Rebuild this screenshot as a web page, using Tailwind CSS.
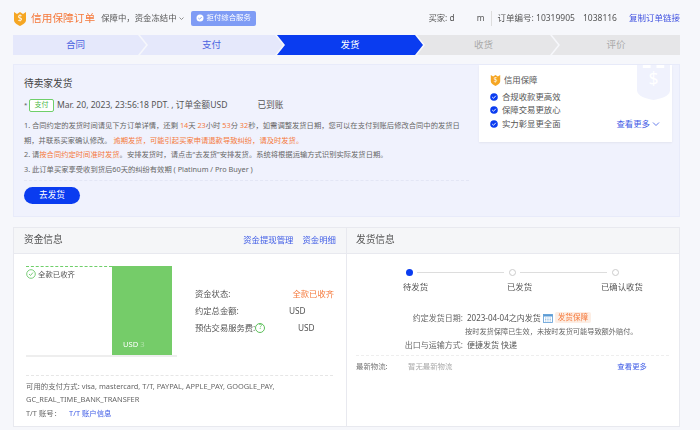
<!DOCTYPE html>
<html lang="zh-CN">
<head>
  <meta charset="UTF-8" />
  <title>信用保障订单</title>
  <script src="https://cdn.jsdelivr.net/npm/@tailwindcss/browser@4"></script>
</head>
<body class="bg-[#f6f7fb] text-[#555] w-[700px] h-[430px] overflow-hidden blur-[0.3px] font-['Noto_Sans','Noto_Sans_CJK_SC',sans-serif] text-[8px]">

  <!-- 顶部 -->
  <div class="flex items-center h-[35px] pl-[13px] pr-[20px] pt-[1px]">
    <svg width="14" height="15" viewBox="0 0 14 15"><path d="M1 1l3 2 3-2 3 2 3-2v8c0 3-3 4.500-6 6-3-1.500-6-3-6-6z" fill="#f5a623"/><text x="7" y="10" font-size="8" fill="#fff" text-anchor="middle">$</text></svg>
    <span class="ml-[4px] text-[10.7px] text-[#f5793b]">信用保障订单</span>
    <span class="ml-[6px] text-[8.4px] text-[#555]">保障中，资金冻结中</span>
    <svg class="ml-[1px]" width="7" height="7" viewBox="0 0 7 7"><path d="M1.500 2.500l2 2 2-2" fill="none" stroke="#777" stroke-width=".8"/></svg>
    <span class="ml-[6px] flex items-center gap-[3px] h-[15px] px-[5px] rounded-[2px] bg-[#7f9cf5] text-white text-[7.4px]">
      <svg width="8" height="8" viewBox="0 0 8 8"><circle cx="4" cy="4" r="3.500" fill="#fff"/><path d="M2.300 4l1.200 1.200 2.200-2.200" fill="none" stroke="#7f9cf5" stroke-width=".9"/></svg>
      拒付综合服务
    </span>
    <span class="ml-auto text-[8.4px]">买家: d<span class="inline-block w-[22px]"></span>m</span>
    <span class="mx-[6px] w-px h-[15px] bg-[#ddd]"></span>
    <span class="text-[8.5px]">订单编号: 10319905<span class="inline-block w-[8px]"></span>1038116</span>
    <span class="ml-[12px] text-[8.5px] text-[#3f51e0]">复制订单链接</span>
  </div>

  <!-- 步骤条 -->
  <div class="flex h-[20px] ml-[13px] w-[667px] text-[9.5px]">
    <div class="flex-none w-[133px] -mr-[6px] flex items-center justify-center pr-[8px] bg-[#e5e8fb] text-[#4a63e0] [clip-path:polygon(0_0,calc(100%-8px)_0,100%_50%,calc(100%-8px)_100%,0_100%)]">合同</div>
    <div class="flex-none w-[143px] -mr-[6px] flex items-center justify-center bg-[#e5e8fb] text-[#4a63e0] [clip-path:polygon(0_0,calc(100%-8px)_0,100%_50%,calc(100%-8px)_100%,0_100%,8px_50%)]">支付</div>
    <div class="flex-none w-[146px] -mr-[6px] flex items-center justify-center bg-[#0a3cf0] text-white [clip-path:polygon(0_0,calc(100%-8px)_0,100%_50%,calc(100%-8px)_100%,0_100%,8px_50%)]">发货</div>
    <div class="flex-none w-[141px] -mr-[6px] flex items-center justify-center pr-[8px] bg-[#e6e6e8] text-[#aaa] [clip-path:polygon(0_0,calc(100%-8px)_0,100%_50%,calc(100%-8px)_100%,0_100%,8px_50%)]">收货</div>
    <div class="flex-none w-[128px] flex items-center justify-center bg-[#e6e6e8] text-[#aaa] [clip-path:polygon(0_0,100%_0,100%_100%,0_100%,8px_50%)]">评价</div>
  </div>

  <!-- 待卖家发货 -->
  <div class="relative mt-[9px] ml-[13px] w-[667px] h-[153px] bg-[#f0f2fd] border border-[#e8ebfa] pl-[10px] pr-[10px] pt-[12px]">
    <div class="text-[9.7px] leading-[14px] text-[#444]">待卖家发货</div>
    <div class="flex items-center mt-[8px] h-[13px] text-[8.6px] text-[#555]">
      <span class="w-[5px] text-[6px]">*</span>
      <span class="flex items-center justify-center w-[25px] h-[13px] border border-[#6fcf6a] rounded-[2px] bg-white text-[#4cb848] text-[7px]">支付</span>
      <span class="ml-[3px]">Mar. 20, 2023, 23:56:18 PDT. , 订单金额USD</span>
      <span class="inline-block w-[30px]"></span>
      <span>已到账</span>
    </div>
    <div class="mt-[6px] w-[440px] text-[7.3px] leading-[14.600px] text-[#666]">
      <p>1. 合同约定的发货时间请见下方订单详情，还剩 <span class="text-[#f5793b]">14</span>天 <span class="text-[#f5793b]">23</span>小时 <span class="text-[#f5793b]">53</span>分 <span class="text-[#f5793b]">32</span>秒，如需调整发货日期，您可以在支付到账后修改合同中的发货日期，并联系买家确认修改。 <span class="text-[#f5793b]">逾期发货，可能引起买家申请退款导致纠纷，请及时发货。</span></p>
      <p>2. 请<span class="text-[#f5793b]">按合同约定时间准时发货</span>。安排发货时，请点击“去发货”安排发货。系统将根据运输方式识别实际发货日期。</p>
      <p>3. 此订单买家享受收到货后60天的纠纷有效期 ( Platinum / Pro Buyer )</p>
    </div>
    <div class="mt-[4px] border-t border-dashed border-[#e3e6f5] w-[445px]"></div>
    <div class="mt-[6px] flex items-center justify-center w-[56px] h-[17px] rounded-full bg-[#0a3cf0] text-white text-[8.6px]">去发货</div>

    <!-- 信用保障卡片 -->
    <div class="absolute top-0 right-[7px] w-[193px] h-[77px] bg-white shadow-[0_1px_2px_rgba(0,0,0,0.06)] pl-[11px] pt-[9px] overflow-hidden">
      <svg class="absolute right-0 top-0" width="35" height="35" viewBox="0 0 36 36"><path d="M0 0h6v3h8V0h6v3h8V0h6v26c0 6-10 9-17 10C10 35 0 32 0 26z" fill="#f0f2fd"/><text x="17" y="21" font-size="18" fill="#fff" text-anchor="middle">$</text></svg>
      <div class="flex items-center gap-[3px] h-[12px] text-[8.4px] text-[#555]">
        <svg width="11" height="12" viewBox="0 0 14 15"><path d="M1 1l3 2 3-2 3 2 3-2v8c0 3-3 4.500-6 6-3-1.500-6-3-6-6z" fill="#f5a623"/><text x="7" y="10" font-size="8" fill="#fff" text-anchor="middle">$</text></svg>
        信用保障
      </div>
      <div class="mt-[5px] flex flex-col gap-[1.300px] text-[8.4px] leading-[12px] text-[#555]">
        <div class="flex items-center gap-[4px]"><svg width="8" height="8" viewBox="0 0 8 8"><circle cx="4" cy="4" r="3.800" fill="#0a3cf0"/><path d="M2.200 4l1.300 1.300 2.300-2.500" fill="none" stroke="#fff" stroke-width=".9"/></svg>合规收款更高效</div>
        <div class="flex items-center gap-[4px]"><svg width="8" height="8" viewBox="0 0 8 8"><circle cx="4" cy="4" r="3.800" fill="#0a3cf0"/><path d="M2.200 4l1.300 1.300 2.300-2.500" fill="none" stroke="#fff" stroke-width=".9"/></svg>保障交易更放心</div>
        <div class="flex items-center gap-[4px]">
          <svg width="8" height="8" viewBox="0 0 8 8"><circle cx="4" cy="4" r="3.800" fill="#0a3cf0"/><path d="M2.200 4l1.300 1.300 2.300-2.500" fill="none" stroke="#fff" stroke-width=".9"/></svg>实力彰显更全面
          <span class="ml-auto mr-[12px] flex items-center gap-[2px] text-[#3f5ce6]">查看更多<svg width="8" height="8" viewBox="0 0 8 8"><path d="M1 2.500l3 3 3-3" fill="none" stroke="#3f5ce6" stroke-width=".8"/></svg></span>
        </div>
      </div>
    </div>
  </div>

  <!-- 资金信息 / 发货信息 -->
  <div class="mt-[10px] ml-[13px] w-[667px] h-[200px] flex border border-[#e8e9ef] bg-white">
    <div class="w-[333px] flex-none border-r border-[#e8e9ef] flex flex-col">
      <div class="flex items-center justify-between h-[26px] bg-[#f5f6f8] border-b border-[#e8e9ef] pl-[10px] pr-[10px]">
        <span class="text-[9.7px] text-[#555]">资金信息</span>
        <span class="flex gap-[9px] text-[8.4px] text-[#3f5ce6]"><span>资金提现管理</span><span>资金明细</span></span>
      </div>
      <div class="flex pl-[12px] pt-[12px]">
        <div class="flex w-[151px] h-[91px] border-b-2 border-[#eee]">
          <div class="w-[86px] border-t border-dashed border-[#6fcf6a] flex items-start gap-[2px] pt-[2px] text-[7.4px] text-[#555]">
            <svg width="10" height="10" viewBox="0 0 10 10"><circle cx="5" cy="5" r="4.300" fill="none" stroke="#5cc05a" stroke-width=".8"/><path d="M3 5l1.500 1.500 2.500-3" fill="none" stroke="#5cc05a" stroke-width=".8"/></svg>
            全款已收齐
          </div>
          <div class="w-[60px] bg-[#75cc69] flex items-end pl-[11px] pb-[5px] text-[7.6px] text-white">USD <span class="opacity-40">&nbsp;3</span></div>
        </div>
        <div class="ml-[18px] mt-[19px] w-[139px] text-[8.3px] leading-[17px] text-[#555]">
          <div class="flex justify-between"><span>资金状态:</span><span class="text-[#f5793b]">全款已收齐</span></div>
          <div class="flex"><span>约定总金额:</span><span class="ml-auto w-[45px]">USD</span></div>
          <div class="flex items-center">
            <span>预估交易服务费:</span>
            <span class="flex items-center justify-center w-[10px] h-[10px] rounded-full border border-[#5cc05a] text-[#5cc05a] text-[6.500px] leading-none">?</span>
            <span class="ml-auto w-[36px]">USD</span>
          </div>
        </div>
      </div>
      <div class="ml-[12px] mt-[18px] w-[307px] border-t border-dashed border-[#e6e6e6]"></div>
      <div class="ml-[12px] mt-[4px] w-[310px] text-[7.4px] leading-[13.300px] text-[#666]">
        <p>可用的支付方式: visa, mastercard, T/T, PAYPAL, APPLE_PAY, GOOGLE_PAY, GC_REAL_TIME_BANK_TRANSFER</p>
        <p>T/T 账号：<span class="ml-[8px] text-[#3f5ce6]">T/T 账户信息</span></p>
      </div>
    </div>

    <div class="flex-1 flex flex-col">
      <div class="flex items-center h-[26px] bg-[#f5f6f8] border-b border-[#e8e9ef] pl-[9px]">
        <span class="text-[9.7px] text-[#555]">发货信息</span>
      </div>
      <!-- 物流进度 -->
      <div class="flex items-center pl-[59px] mt-[14px] h-[8px]">
        <span class="w-[7px] h-[7px] rounded-full bg-[#0a3cf0]"></span>
        <span class="ml-[4px] w-[87px] h-px bg-[#ddd]"></span>
        <span class="ml-[5px] w-[7px] h-[7px] rounded-full border border-[#ccc]"></span>
        <span class="ml-[4px] w-[87px] h-px bg-[#ddd]"></span>
        <span class="ml-[5px] w-[7px] h-[7px] rounded-full border border-[#ccc]"></span>
      </div>
      <div class="flex mt-[5px] h-[12px] text-[8.4px] leading-[12px] text-[#555]">
        <span class="ml-[56px] w-[104px]">待发货</span>
        <span class="w-[94px]">已发货</span>
        <span>已确认收货</span>
      </div>
      <div class="mt-[18px] text-[8px] text-[#555]">
        <div class="flex items-center h-[13px]">
          <span class="w-[116px] text-right text-[#666]">约定发货日期:</span>
          <span class="ml-[4px]">2023-04-04之内发货</span>
          <svg class="ml-[2px]" width="10" height="10" viewBox="0 0 10 10"><rect x=".5" y="1.500" width="9" height="8" fill="#fff" stroke="#5b9bd5" stroke-width=".8"/><rect x=".5" y="1.500" width="9" height="2" fill="#5b9bd5"/><path d="M2 5h6M2 6.500h6M2 8h6" stroke="#5b9bd5" stroke-width=".6" stroke-dasharray="1 .7"/></svg>
          <span class="ml-[2px] flex items-center h-[11px] px-[3px] rounded-[2px] bg-[#fdeee4] text-[#f5793b] text-[7.6px]">发货保障</span>
        </div>
        <div class="pl-[118px] mt-[1px] leading-[12px] text-[7.2px] text-[#666]">按时发货保障已生效，未按时发货可能导致额外赔付。</div>
        <div class="flex items-center h-[13px] mt-[1px]">
          <span class="w-[116px] text-right text-[#666]">出口与运输方式:</span>
          <span class="ml-[4px]">便捷发货 快递</span>
        </div>
      </div>
      <div class="mt-[4px] ml-[9px] w-[313px] border-t border-dashed border-[#eee]"></div>
      <div class="flex items-center ml-[9px] mt-[5px] h-[12px] text-[7.4px]">
        <span class="w-[52px] text-[#777]">最新物流:</span>
        <span class="text-[#aaa]">暂无最新物流</span>
        <span class="ml-[165px] text-[#3f5ce6]">查看更多</span>
      </div>
    </div>
  </div>

</body>
</html>
